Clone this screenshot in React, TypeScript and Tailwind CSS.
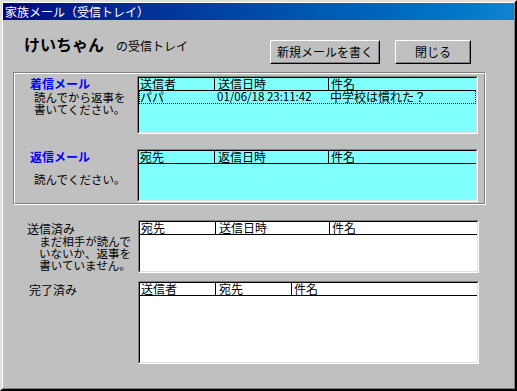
type Col = { label: string; w?: string; pl: string };

interface ListViewProps {
  cols: Col[];
  h: string;
  bg: string;
  rows?: string[][];
}

function ListView({ cols, h, bg, rows = [] }: ListViewProps) {
  return (
    <div className={`w-[341px] ${h} border border-[#808080] border-r-white border-b-white`}>
      <div className={`h-full border border-black border-r-[#dfdfdf] border-b-[#dfdfdf] ${bg}`}>
        <div className="flex h-[13px] border-b border-black text-[12px] leading-[13px]">
          {cols.map((c, i) => (
            <div
              key={c.label}
              className={`${c.w ?? 'flex-1'} ${c.pl} ${i > 0 ? 'border-l border-black' : ''} -mt-px shrink-0 whitespace-nowrap`}
            >
              {c.label}
            </div>
          ))}
        </div>
        {rows.map((r, ri) => (
          <div
            key={ri}
            className="flex h-[13px] border border-dotted border-black border-t-0 text-[12px] leading-[13px]"
          >
            {r.map((v, i) => (
              <div
                key={i}
                className={`${cols[i].w ?? 'flex-1'} ${cols[i].pl} ${i === 0 ? '-ml-px' : ''} -mt-px shrink-0 whitespace-nowrap ${i === 1 ? 'text-[11.5px]' : ''}`}
              >
                {v}
              </div>
            ))}
          </div>
        ))}
      </div>
    </div>
  );
}

function Button({ children, w }: { children: string; w: string }) {
  return (
    <div className={`${w} h-[24px] border border-white border-r-black border-b-black`}>
      <div className="flex h-full items-center justify-center border border-transparent border-r-[#808080] border-b-[#808080] text-[12px] leading-none">
        {children}
      </div>
    </div>
  );
}

const inboxCols: Col[] = [
  { label: '送信者', w: 'w-[75px]', pl: 'pl-[1px]' },
  { label: '送信日時', w: 'w-[114px]', pl: 'pl-[3px]' },
  { label: '件名', pl: 'pl-[2px]' },
];

const replyCols: Col[] = [
  { label: '宛先', w: 'w-[75px]', pl: 'pl-[1px]' },
  { label: '返信日時', w: 'w-[114px]', pl: 'pl-[3px]' },
  { label: '件名', pl: 'pl-[2px]' },
];

const sentCols: Col[] = [
  { label: '宛先', w: 'w-[75px]', pl: 'pl-[1px]' },
  { label: '送信日時', w: 'w-[114px]', pl: 'pl-[3px]' },
  { label: '件名', pl: 'pl-[2px]' },
];

const doneCols: Col[] = [
  { label: '送信者', w: 'w-[75px]', pl: 'pl-[1px]' },
  { label: '宛先', w: 'w-[76px]', pl: 'pl-[3px]' },
  { label: '件名', pl: 'pl-[2px]' },
];

export default function App() {
  return (
    <div className="h-[391px] w-[517px] border-2 border-t-[#dfdfdf] border-l-[#dfdfdf] border-r-black border-b-black bg-[#c0c0c0] font-['Noto_Sans_CJK_JP',sans-serif] text-black">
      <div className="h-full border border-white border-r-[#808080] border-b-[#808080]">
        {/* title bar */}
        <div className="h-[17px] bg-linear-to-r from-[#000080] to-[#1084d0] pl-[2px] text-[12px] leading-[17px] text-white">
          家族メール（受信トレイ）
        </div>

        {/* header */}
        <div className="flex h-[52px]">
          <div className="flex flex-1 items-baseline pl-[21px] pt-[15px]">
            <span className="text-[16px] font-bold leading-[18px]">けいちゃん</span>
            <span className="ml-[12px] text-[12px] leading-[18px]">の受信トレイ</span>
          </div>
          <div className="flex gap-[15px] pr-[43px] pt-[20px]">
            <Button w="w-[110px]">新規メールを書く</Button>
            <Button w="w-[76px]">閉じる</Button>
          </div>
        </div>

        {/* group box */}
        <div className="ml-[10px] h-[133px] w-[473px] border border-[#808080] border-r-white border-b-white">
          <div className="h-full border border-white border-r-[#808080] border-b-[#808080] pt-[2px]">
            <div className="flex">
              <div className="w-[122px] pt-[1px] text-[12px] leading-[13px]">
                <div className="pl-[15px] font-bold text-[#0000ff]">着信メール</div>
                <div className="pl-[19px] pt-[1px] text-[11.5px]">読んでから返事を</div>
                <div className="pl-[19px] -mt-px text-[11.5px]">書いてください。</div>
              </div>
              <ListView cols={inboxCols} h="h-[58px]" bg="bg-[#80ffff]" rows={[['パパ', '01/06/18 23:11:42', '中学校は慣れた？']]} />
            </div>
            <div className="mt-[15px] flex">
              <div className="w-[122px] pt-[1px] text-[12px] leading-[13px]">
                <div className="pl-[15px] font-bold text-[#0000ff]">返信メール</div>
                <div className="pl-[19px] pt-[10px] text-[11.5px]">読んでください。</div>
              </div>
              <ListView cols={replyCols} h="h-[53px]" bg="bg-[#80ffff]" />
            </div>
          </div>
        </div>

        {/* below group */}
        <div className="mt-[15px] flex">
          <div className="w-[135px] pt-[2px] text-[12px] leading-[13px]">
            <div className="pl-[24px]">送信済み</div>
            <div className="ml-[34px] w-[96px] text-center text-[11.5px] leading-[12px]">
              <div>まだ相手が読んで</div>
              <div>いないか、返事を</div>
              <div>書いていません。</div>
            </div>
          </div>
          <ListView cols={sentCols} h="h-[53px]" bg="bg-white" />
        </div>
        <div className="mt-[8px] flex">
          <div className="w-[135px] pt-[2px] text-[12px] leading-[13px]">
            <div className="pl-[26px]">完了済み</div>
          </div>
          <ListView cols={doneCols} h="h-[83px]" bg="bg-white" />
        </div>
      </div>
    </div>
  );
}
